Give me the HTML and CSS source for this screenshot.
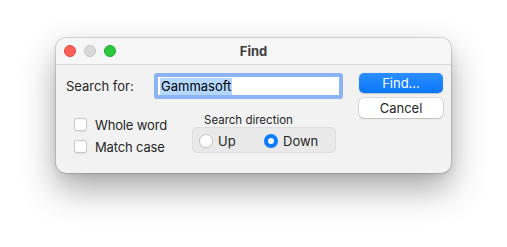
FILE: index.html
```html
<!DOCTYPE html>
<html>
<head>
<meta charset="utf-8">
<link rel="stylesheet" href="styles.css">
</head>
<body>
<div class="window">
  <div class="titlebar">
    <div class="lights">
      <span class="light red"></span>
      <span class="light gray"></span>
      <span class="light green"></span>
    </div>
    <div class="title">Find</div>
  </div>
  <div class="content">
    <div class="main">
      <div class="row-search">
        <span class="label">Search for:</span>
        <div class="field"><span class="sel">Gammasoft</span></div>
      </div>
      <div class="row-options">
        <div class="checks">
          <div class="check"><span class="box"></span><span>Whole word</span></div>
          <div class="check"><span class="box"></span><span>Match case</span></div>
        </div>
        <div class="direction">
          <div class="group-label">Search direction</div>
          <div class="group">
            <div class="radio"><span class="dot"></span><span>Up</span></div>
            <div class="radio on"><span class="dot"></span><span>Down</span></div>
          </div>
        </div>
      </div>
    </div>
    <div class="buttons">
      <div class="btn primary">Find...</div>
      <div class="btn">Cancel</div>
    </div>
  </div>
</div>
</body>
</html>
```
FILE: styles.css
```css
html, body {
  margin: 0;
  padding: 0;
  background: #ffffff;
}
html {
  height: 100%;
}
body {
  min-height: 100%;
  box-sizing: border-box;
  padding: 38px 0 0 56px;
  font-family: "Inter", "Liberation Sans", sans-serif;
  font-size: 13px;
  color: #262626;
}
.window {
  width: 395px;
  height: 135px;
  box-sizing: border-box;
  border-radius: 10px;
  background: #f2f2f2;
  overflow: hidden;
  box-shadow: 0 0 0 1px rgba(0,0,0,0.12), 0 16px 34px rgba(0,0,0,0.34), 0 2px 8px rgba(0,0,0,0.08);
}
.titlebar {
  height: 27px;
  box-sizing: border-box;
  border-bottom: 1px solid #dadada;
  background: #f6f6f6;
  display: flex;
  align-items: center;
  position: relative;
}
.lights {
  display: flex;
  gap: 8px;
  padding-left: 8px;
  position: relative;
  z-index: 1;
}
.light {
  width: 12px;
  height: 12px;
  border-radius: 50%;
  box-sizing: border-box;
}
.red { background: #fe5f57; border: 0.5px solid #e1473f; }
.gray { background: #d9d9d9; border: 0.5px solid #c4c4c4; }
.green { background: #2bc840; border: 0.5px solid #1ea930; }
.title {
  position: absolute;
  left: 0;
  right: 0;
  text-align: center;
  font-weight: 700;
  color: #404040;
}
.content {
  display: flex;
  padding: 0 8px 0 10px;
}
.main {
  width: 293px;
  flex-shrink: 0;
}
.row-search {
  display: flex;
  align-items: center;
  margin-top: 11px;
}
.label {
  width: 88px;
  flex-shrink: 0;
}
.field {
  width: 183px;
  height: 20px;
  box-sizing: border-box;
  margin-left: 3px;
  background: #fff;
  border: 1px solid #8db4f2;
  box-shadow: 0 0 0 3px #8cb3f3;
  border-radius: 1px;
  display: flex;
  align-items: center;
  padding-left: 2px;
  color: #000;
}
.sel {
  background: #b3d7ff;
  line-height: 17px;
  padding: 0 1px;
}
.row-options {
  display: flex;
  margin-top: 16px;
}
.checks {
  width: 126px;
  flex-shrink: 0;
  padding-left: 8px;
  box-sizing: border-box;
  display: flex;
  flex-direction: column;
  gap: 9px;
  margin-top: 6px;
  letter-spacing: -0.15px;
}
.check {
  display: flex;
  align-items: center;
  gap: 8px;
  height: 13px;
}
.box {
  width: 13px;
  height: 13px;
  flex-shrink: 0;
  box-sizing: border-box;
  border: 1px solid #c9c9c9;
  border-radius: 3px;
  background: #fff;
  box-shadow: 0 0.5px 1px rgba(0,0,0,0.08);
}
.direction {
  width: 144px;
  flex-shrink: 0;
}
.group-label {
  padding: 2px 0 0 12px;
  font-size: 11.5px;
  line-height: 13px;
  color: #262626;
}
.group {
  height: 26px;
  box-sizing: border-box;
  border: 1px solid #dedede;
  border-radius: 5px;
  background: #e9e9e9;
  display: flex;
  align-items: center;
  padding: 1px 0 0 6px;
  gap: 21px;
}
.radio {
  display: flex;
  align-items: center;
  gap: 5px;
  width: 44px;
  flex-shrink: 0;
}
.radio .dot {
  width: 14px;
  height: 14px;
  flex-shrink: 0;
  box-sizing: border-box;
  border-radius: 50%;
  border: 1px solid #c6c6c6;
  background: #fff;
  box-shadow: 0 0.5px 1px rgba(0,0,0,0.06);
}
.radio.on .dot {
  border: 4.5px solid #0b7cff;
  background: #fff;
}
.buttons {
  margin-top: 8px;
  display: flex;
  flex-direction: column;
  gap: 5px;
}
.btn {
  width: 84px;
  height: 20px;
  box-sizing: border-box;
  border-radius: 5px;
  background: #fff;
  box-shadow: 0 0 0 0.5px rgba(0,0,0,0.2), 0 1px 1.5px rgba(0,0,0,0.12);
  display: flex;
  align-items: center;
  justify-content: center;
  color: #262626;
}
.btn.primary {
  background: linear-gradient(#2a8fff, #0a76fa);
  color: #fff;
  box-shadow: 0 0.5px 1px rgba(0,0,0,0.2);
}
```
